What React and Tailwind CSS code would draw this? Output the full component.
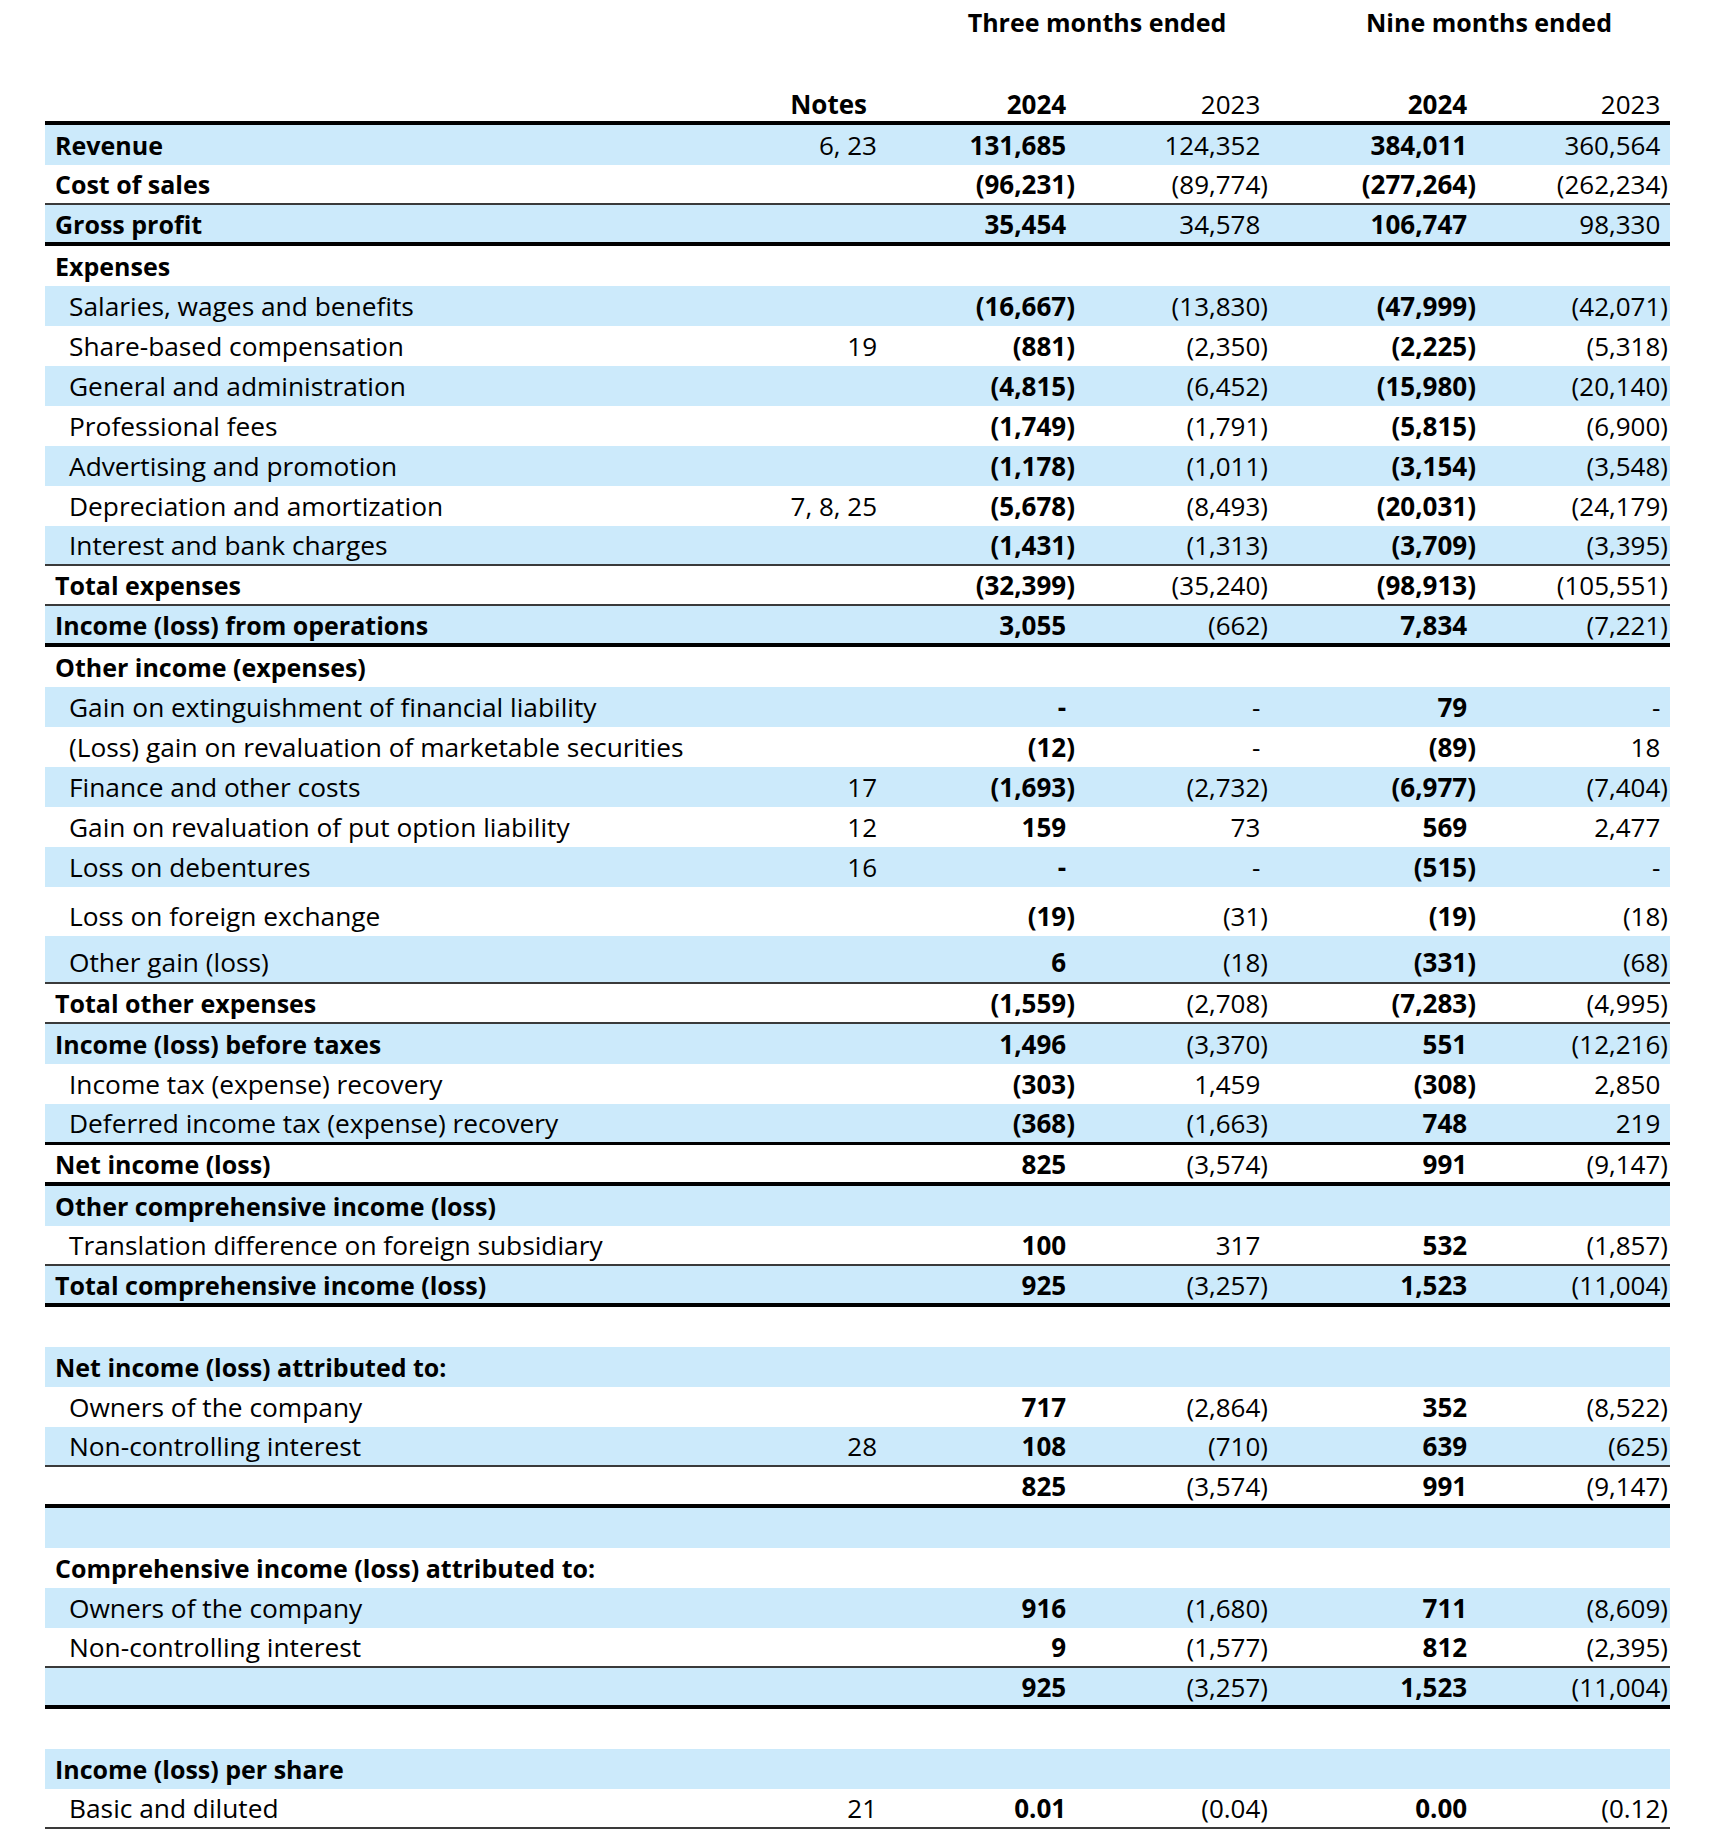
import React from 'react';

// income statement rows: v = [3m 2024, 3m 2023, 9m 2024, 9m 2023]
const rows = [
  { label: 'Revenue', bold: true, blue: true, note: '6, 23', v: ['131,685', '124,352', '384,011', '360,564'] },
  { label: 'Cost of sales', bold: true, line: 'thin', v: ['(96,231)', '(89,774)', '(277,264)', '(262,234)'] },
  { label: 'Gross profit', bold: true, blue: true, line: 'thick', v: ['35,454', '34,578', '106,747', '98,330'] },
  { label: 'Expenses', bold: true },
  { label: 'Salaries, wages and benefits', blue: true, v: ['(16,667)', '(13,830)', '(47,999)', '(42,071)'] },
  { label: 'Share-based compensation', note: '19', v: ['(881)', '(2,350)', '(2,225)', '(5,318)'] },
  { label: 'General and administration', blue: true, v: ['(4,815)', '(6,452)', '(15,980)', '(20,140)'] },
  { label: 'Professional fees', v: ['(1,749)', '(1,791)', '(5,815)', '(6,900)'] },
  { label: 'Advertising and promotion', blue: true, v: ['(1,178)', '(1,011)', '(3,154)', '(3,548)'] },
  { label: 'Depreciation and amortization', note: '7, 8, 25', v: ['(5,678)', '(8,493)', '(20,031)', '(24,179)'] },
  { label: 'Interest and bank charges', blue: true, line: 'thin', v: ['(1,431)', '(1,313)', '(3,709)', '(3,395)'] },
  { label: 'Total expenses', bold: true, line: 'thin', v: ['(32,399)', '(35,240)', '(98,913)', '(105,551)'] },
  { label: 'Income (loss) from operations', bold: true, blue: true, line: 'thick', v: ['3,055', '(662)', '7,834', '(7,221)'] },
  { label: 'Other income (expenses)', bold: true },
  { label: 'Gain on extinguishment of financial liability', blue: true, v: ['-', '-', '79', '-'] },
  { label: '(Loss) gain on revaluation of marketable securities', v: ['(12)', '-', '(89)', '18'] },
  { label: 'Finance and other costs', blue: true, note: '17', v: ['(1,693)', '(2,732)', '(6,977)', '(7,404)'] },
  { label: 'Gain on revaluation of put option liability', note: '12', v: ['159', '73', '569', '2,477'] },
  { label: 'Loss on debentures', blue: true, note: '16', v: ['-', '-', '(515)', '-'] },
  { label: 'Loss on foreign exchange', size: 'fx', v: ['(19)', '(31)', '(19)', '(18)'] },
  { label: 'Other gain (loss)', blue: true, size: 'other', line: 'thin', v: ['6', '(18)', '(331)', '(68)'] },
  { label: 'Total other expenses', bold: true, line: 'thin', v: ['(1,559)', '(2,708)', '(7,283)', '(4,995)'] },
  { label: 'Income (loss) before taxes', bold: true, blue: true, v: ['1,496', '(3,370)', '551', '(12,216)'] },
  { label: 'Income tax (expense) recovery', v: ['(303)', '1,459', '(308)', '2,850'] },
  { label: 'Deferred income tax (expense) recovery', blue: true, line: 'mid', v: ['(368)', '(1,663)', '748', '219'] },
  { label: 'Net income (loss)', bold: true, line: 'thick', v: ['825', '(3,574)', '991', '(9,147)'] },
  { label: 'Other comprehensive income (loss)', bold: true, blue: true },
  { label: 'Translation difference on foreign subsidiary', line: 'thin', v: ['100', '317', '532', '(1,857)'] },
  { label: 'Total comprehensive income (loss)', bold: true, blue: true, line: 'thick', v: ['925', '(3,257)', '1,523', '(11,004)'] },
  {},
  { label: 'Net income (loss) attributed to:', bold: true, blue: true },
  { label: 'Owners of the company', v: ['717', '(2,864)', '352', '(8,522)'] },
  { label: 'Non-controlling interest', blue: true, note: '28', line: 'thin', v: ['108', '(710)', '639', '(625)'] },
  { line: 'thick', v: ['825', '(3,574)', '991', '(9,147)'] },
  { blue: true },
  { label: 'Comprehensive income (loss) attributed to:', bold: true },
  { label: 'Owners of the company', blue: true, v: ['916', '(1,680)', '711', '(8,609)'] },
  { label: 'Non-controlling interest', line: 'thin', v: ['9', '(1,577)', '812', '(2,395)'] },
  { blue: true, line: 'thick', v: ['925', '(3,257)', '1,523', '(11,004)'] },
  {},
  { label: 'Income (loss) per share', bold: true, blue: true },
  { label: 'Basic and diluted', note: '21', line: 'thin', v: ['0.01', '(0.04)', '0.00', '(0.12)'] },
];

const cols = 'grid grid-cols-[655px_180px_197px_193px_208px_192px]';

function Num({ v, bold }) {
  if (v == null) return <div />;
  const neg = v.startsWith('(');
  return (
    <div className={`text-right pr-[2px] text-[26px] ${bold ? 'font-bold' : 'font-normal'}`}>
      {v}
      {!neg && <span className="invisible">)</span>}
    </div>
  );
}

function Row({ r }) {
  const bg = r.blue ? 'bg-[#cceafb]' : 'bg-white';
  let border = '';
  let h = 'h-[40px]';
  if (r.line === 'thin') border = 'border-b-2 border-[#3a3a3a]';
  if (r.line === 'mid') {
    border = 'border-b-[3px] border-black';
    h = 'h-[41px]';
  }
  if (r.line === 'thick') {
    border = 'border-b-4 border-black';
    h = 'h-[41px]';
  }
  if (r.size === 'fx') h = 'h-[49px] pt-[8px]';
  if (r.size === 'other') h = 'h-[48px] pt-[5px]';
  const v = r.v || [];

  return (
    <div className={`${cols} items-center box-border leading-[36px] ${h} ${bg} ${border}`}>
      <div className={r.bold ? 'pl-[10px] font-bold text-[25px]' : 'pl-[24px] text-[26.3px]'}>{r.label}</div>
      <div className="text-right pr-[3px] text-[26px]">{r.note}</div>
      <Num v={v[0]} bold />
      <Num v={v[1]} />
      <Num v={v[2]} bold />
      <Num v={v[3]} />
    </div>
  );
}

export default function App() {
  return (
    <div className="min-h-screen bg-white font-['Open_Sans',sans-serif] text-black">
      <div className="ml-[45px] w-[1625px] pb-[14px]">
        {/* period headings */}
        <div className={`${cols} h-[46px] items-center font-bold text-[25px]`}>
          <div />
          <div />
          <div className="col-span-2 text-center pl-[44px]">Three months ended</div>
          <div className="col-span-2 text-center pl-[38px]">Nine months ended</div>
        </div>

        {/* column headings */}
        <div className={`${cols} h-[79px] items-end leading-[34px] border-b-4 border-black box-border text-[26px]`}>
          <div />
          <div className="text-right pr-[13px] font-bold">Notes</div>
          <Num v="2024" bold />
          <Num v="2023" />
          <Num v="2024" bold />
          <Num v="2023" />
        </div>

        {rows.map((r, i) => (
          <Row key={i} r={r} />
        ))}
      </div>
    </div>
  );
}
